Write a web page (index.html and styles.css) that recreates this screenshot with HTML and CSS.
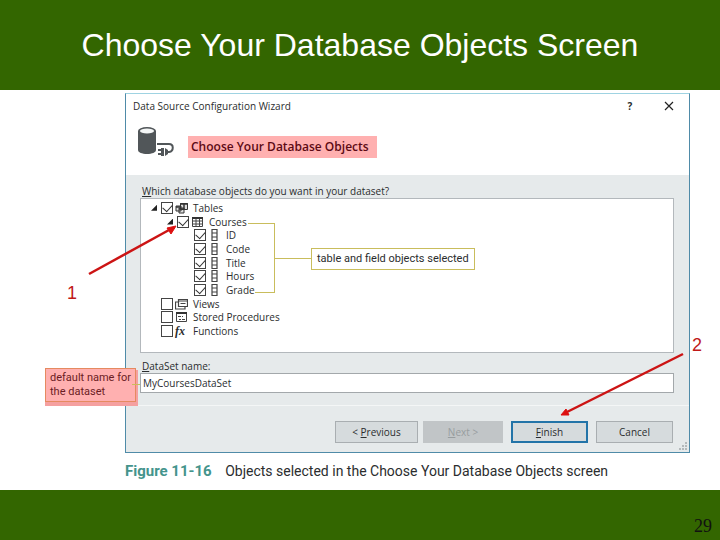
FILE: index.html
```html
<!DOCTYPE html>
<html lang="en">
<head>
    <meta charset="UTF-8">
    <meta name="viewport" content="width=device-width, initial-scale=1.0">
    <title>Choose Your Database Objects Screen</title>
    <link rel="stylesheet" href="styles.css">
</head>
<body>
    <header class="slide-header">
        <h1>Choose Your Database Objects Screen</h1>
    </header>

    <main class="figure">
        <section class="dialog">
            <div class="title-bar">
                <span class="title">Data Source Configuration Wizard</span>
                <button class="title-button help" aria-label="Help">?</button>
                <button class="title-button" aria-label="Close">
                    <svg width="10" height="10" viewBox="0 0 10 10"><path d="M1 1l8 8M9 1l-8 8" stroke="#222" stroke-width="1.2"/></svg>
                </button>
            </div>
            <div class="banner">
                <svg class="banner-icon" width="38" height="34" viewBox="0 0 38 34">
                    <path d="M1 5v19c0 2.400 4 4 9 4s9-1.600 9-4V5z" fill="#515659"/>
                    <ellipse cx="10" cy="5" rx="9" ry="4" fill="#515659"/>
                    <ellipse cx="10" cy="5" rx="7" ry="2.500" fill="#f4f6f6"/>
                    <path d="M20 18h12c5 0 5 7 0 8h-2" fill="none" stroke="#515659" stroke-width="2"/>
                    <path d="M24 22h3v8h-3zM28 22l3 2v4l-3 2zM21 23h3v2h-3zM21 27h3v2h-3z" fill="#515659"/>
                </svg>
                <h2>Choose Your Database Objects</h2>
            </div>
            <div class="dialog-body">
                <div class="field-label" id="treeLabel"><u>W</u>hich database objects do you want in your dataset?</div>
                <div class="tree-box">
                    <ul class="tree" aria-labelledby="treeLabel">
                        <li>
                            <button class="toggle" aria-label="Collapse Tables"></button>
                            <input type="checkbox" id="tables" checked>
                            <svg class="icon" width="13" height="12" viewBox="0 0 13 12">
                                <path d="M5.500 1.500h7v6h-7zM1 4h5v5H1zM4 6h5v5H4z" fill="#ddd" stroke="#333"/>
                                <path d="M5 2h8M1 5h5M4 7h5M9 1v6" stroke="#333" stroke-width="1.500"/>
                            </svg>
                            <label for="tables">Tables</label>
                        </li>
                        <li class="level-2">
                            <button class="toggle" aria-label="Collapse Courses"></button>
                            <input type="checkbox" id="courses" checked>
                            <svg class="icon" width="13" height="12" viewBox="0 0 13 12">
                                <path d="M1.500 1.500h10v9h-10zM1.500 5h10M1.500 8h10M5 2v9M8.500 2v9" fill="none" stroke="#444"/>
                                <path d="M1 2h11" stroke="#333" stroke-width="2"/>
                            </svg>
                            <label for="courses">Courses</label>
                        </li>
                        <li class="level-3">
                            <input type="checkbox" id="fieldId" checked>
                            <svg class="icon" width="13" height="12" viewBox="0 0 13 12"><path d="M4 .5h5v11H4zM4 4h5M4 8h5" fill="none" stroke="#444" stroke-width="1.200"/></svg>
                            <label for="fieldId">ID</label>
                        </li>
                        <li class="level-3">
                            <input type="checkbox" id="fieldCode" checked>
                            <svg class="icon" width="13" height="12" viewBox="0 0 13 12"><path d="M4 .5h5v11H4zM4 4h5M4 8h5" fill="none" stroke="#444" stroke-width="1.200"/></svg>
                            <label for="fieldCode">Code</label>
                        </li>
                        <li class="level-3">
                            <input type="checkbox" id="fieldTitle" checked>
                            <svg class="icon" width="13" height="12" viewBox="0 0 13 12"><path d="M4 .5h5v11H4zM4 4h5M4 8h5" fill="none" stroke="#444" stroke-width="1.200"/></svg>
                            <label for="fieldTitle">Title</label>
                        </li>
                        <li class="level-3">
                            <input type="checkbox" id="fieldHours" checked>
                            <svg class="icon" width="13" height="12" viewBox="0 0 13 12"><path d="M4 .5h5v11H4zM4 4h5M4 8h5" fill="none" stroke="#444" stroke-width="1.200"/></svg>
                            <label for="fieldHours">Hours</label>
                        </li>
                        <li class="level-3">
                            <input type="checkbox" id="fieldGrade" checked>
                            <svg class="icon" width="13" height="12" viewBox="0 0 13 12"><path d="M4 .5h5v11H4zM4 4h5M4 8h5" fill="none" stroke="#444" stroke-width="1.200"/></svg>
                            <label for="fieldGrade">Grade</label>
                        </li>
                        <li class="leaf">
                            <input type="checkbox" id="views">
                            <svg class="icon" width="13" height="12" viewBox="0 0 13 12">
                                <path d="M3.500 1.500h9v7h-9zM3 3h9" fill="#fff" stroke="#444" stroke-width="1.200"/>
                                <path d="M3 4H.5v7H10V9M5.500 5.500h5" fill="none" stroke="#444" stroke-width="1.200"/>
                            </svg>
                            <label for="views">Views</label>
                        </li>
                        <li class="leaf">
                            <input type="checkbox" id="procedures">
                            <svg class="icon" width="13" height="12" viewBox="0 0 13 12">
                                <path d="M1.500 1.500h10v9h-10z" fill="#fff" stroke="#444"/>
                                <path d="M1 2h11" stroke="#333" stroke-width="2"/>
                                <path d="M3 5.500h3M7 5.500h1M4 8.500h2M7 8.500h3" stroke="#444" stroke-width="1.200"/>
                            </svg>
                            <label for="procedures">Stored Procedures</label>
                        </li>
                        <li class="leaf">
                            <input type="checkbox" id="functions">
                            <span class="icon fx">fx</span>
                            <label for="functions">Functions</label>
                        </li>
                    </ul>
                </div>
                <label class="field-label dataset-label" for="datasetName"><u>D</u>ataSet name:</label>
                <input type="text" id="datasetName" class="dataset-input" value="MyCoursesDataSet">
            </div>
            <div class="actions">
                <button class="action previous">&lt; <u>P</u>revious</button>
                <button class="action next" disabled><u>N</u>ext &gt;</button>
                <button class="action finish"><u>F</u>inish</button>
                <button class="action">Cancel</button>
            </div>
            <svg class="grip" width="8" height="8" viewBox="0 0 8 8">
                <path d="M6 0h2v2H6zM3 3h2v2H3zM6 3h2v2H6zM0 6h2v2H0zM3 6h2v2H3zM6 6h2v2H6z" fill="#b4b9bb"/>
            </svg>
        </section>
        <p class="caption"><strong>Figure 11-16</strong> Objects selected in the Choose Your Database Objects screen</p>

        <!-- callouts over the dialog -->
        <div class="bracket courses-line"></div>
        <div class="bracket grade-line"></div>
        <div class="bracket middle-line"></div>
        <div class="callout selected-note">table and field objects selected</div>
        <div class="callout name-note">default name for<br>the dataset</div>
        <div class="bracket name-line"></div>

        <span class="step step-1">1</span>
        <svg class="arrow arrow-1" width="92" height="54" viewBox="0 0 92 54">
            <path d="M2 52L82 8" stroke="#cc1414" stroke-width="2.500"/>
            <path d="M89 4l-5 8-4-6z" fill="#dd1010" stroke="#dd1010"/>
        </svg>
        <span class="step step-2">2</span>
        <svg class="arrow arrow-2" width="126" height="66" viewBox="0 0 126 66">
            <path d="M124 2L8 60" stroke="#cc1414" stroke-width="2.500"/>
            <path d="M2 63l5-6 3 6z" fill="#dd1010" stroke="#dd1010"/>
        </svg>
    </main>

    <footer class="slide-footer">29</footer>
</body>
</html>
```

FILE: styles.css
```css
:root {
    --green: #336600;
    --text: #2b2d2e;
    --panel: #e6eaeb;
    --callout: #c9bd5c;
    --red: #c01818;
}

* {
    box-sizing: border-box;
}

body {
    margin: 0;
    min-height: 100vh;
    display: flex;
    flex-direction: column;
    background: #fff;
    color: var(--text);
    font-family: "Open Sans", "Liberation Sans", sans-serif;
    font-size: 10px;
    line-height: 14px;
}

button,
input {
    font: inherit;
    color: inherit;
    margin: 0;
    padding: 0;
}

h1,
h2,
p,
ul {
    margin: 0;
    padding: 0;
}

.slide-header {
    height: 90px;
    display: flex;
    align-items: center;
    justify-content: center;
    background: var(--green);
}

.slide-header h1 {
    color: #fff;
    font-family: "Liberation Sans", Arial, sans-serif;
    font-size: 32px;
    font-weight: normal;
    line-height: 40px;
}

.figure {
    position: relative;
    flex: 1;
    padding: 3px 30px 0 125px;
}

.dialog {
    position: relative;
    display: flex;
    flex-direction: column;
    background: var(--panel);
    border: 1px solid #4f8ba8;
    border-top-color: #9fd3e2;
}

.title-bar {
    display: flex;
    align-items: center;
    height: 24px;
    padding: 0 14px 0 7px;
    background: #fff;
}

.title {
    flex: 1;
}

.title-button {
    width: 12px;
    height: 14px;
    margin-left: 27px;
    display: flex;
    align-items: center;
    justify-content: center;
    border: none;
    background: none;
}

.help {
    font-weight: bold;
}

.banner {
    display: flex;
    align-items: flex-start;
    gap: 13px;
    height: 57px;
    padding: 8px 11px;
    background: #fff;
}

.banner h2 {
    margin-top: 10px;
    padding: 0 8px 0 3px;
    background: #ffb0b0;
    color: #5c0a14;
    font-size: 12px;
    font-weight: 600;
    line-height: 22px;
}

.dialog-body {
    display: flex;
    flex-direction: column;
    height: 231px;
    padding: 9px 15px 0 14px;
    border-bottom: 1px solid #f4f6f6;
}

.field-label {
    padding-left: 2px;
}

.tree-box {
    height: 155px;
    padding: 2px 0 0 10px;
    background: #fff;
    border: 1px solid #b3b8bc;
}

.tree {
    display: grid;
    grid-auto-rows: 1fr;
    height: 137px;
    list-style: none;
}

.tree li {
    display: flex;
    align-items: center;
    min-height: 0;
}

.tree .level-2 {
    padding-left: 16px;
}

.tree .level-3 {
    padding-left: 43px;
}

.tree .leaf {
    padding-left: 10px;
}

.tree label {
    line-height: 12px;
}

.toggle {
    width: 6px;
    height: 6px;
    margin-right: 4px;
    border: none;
    background: #222;
    clip-path: polygon(100% 0, 100% 100%, 0 100%);
}

.tree input {
    position: relative;
    appearance: none;
    width: 12px;
    height: 12px;
    border: 1px solid #444;
    background: #fff;
}

.tree input:checked::after {
    content: "";
    position: absolute;
    left: 1px;
    top: 1px;
    width: 8px;
    height: 5px;
    border: solid #333;
    border-width: 0 0 1px 1px;
    transform: rotate(-48deg);
}

.icon {
    width: 13px;
    margin: 0 5px 0 2px;
}

.fx {
    font-family: "Liberation Serif", serif;
    font-size: 12px;
    font-style: italic;
    font-weight: bold;
    line-height: 12px;
}

.dataset-label {
    margin-top: 6px;
}

.dataset-input {
    height: 20px;
    padding: 0 2px;
    background: #fff;
    border: 1px solid #a3a8ab;
}

.actions {
    display: flex;
    justify-content: flex-end;
    padding: 15px 16px 9px;
}

.action {
    width: 77px;
    height: 22px;
    background: #d6dbdd;
    border: 1px solid #a9aeb1;
}

.previous {
    width: 83px;
    margin-right: 5px;
}

.next {
    width: 80px;
    background: #c1c5c7;
    border-color: #c1c5c7;
    color: #989d9f;
}

.finish {
    margin: 0 8px;
    border: 2px solid #2374a8;
}

.grip {
    position: absolute;
    right: 2px;
    bottom: 2px;
}

.caption {
    margin-top: 8px;
    font-family: Roboto, "Liberation Sans", sans-serif;
    font-size: 14px;
    line-height: 20px;
}

.caption strong {
    margin-right: 10px;
    color: #44948c;
    font-size: 15px;
}

.bracket {
    position: absolute;
    border: 0 solid var(--callout);
}

.courses-line {
    left: 248px;
    top: 133px;
    width: 27px;
    height: 35px;
    border-width: 1px 1px 0 0;
}

.grade-line {
    left: 255px;
    top: 168px;
    width: 20px;
    height: 35px;
    border-width: 0 1px 1px 0;
}

.middle-line {
    left: 275px;
    top: 168px;
    width: 36px;
    border-top-width: 1px;
}

.callout {
    position: absolute;
    padding: 3px 5px;
    border: 1px solid var(--callout);
    background: #fff;
    font-family: Roboto, "Liberation Sans", sans-serif;
    font-size: 11px;
    white-space: nowrap;
}

.selected-note {
    left: 311px;
    top: 158px;
}

.name-note {
    left: 45px;
    top: 278px;
    padding: 2px 4px;
    background: #ffb0b0;
    border-color: #e58a60;
    box-shadow: 1px 3px 0 1px #f5a0a0;
    color: #6b1c24;
}

.name-line {
    left: 132px;
    top: 294px;
    width: 8px;
    border-top-width: 1px;
}

.step {
    position: absolute;
    color: var(--red);
    font-family: "Liberation Sans", Arial, sans-serif;
    font-size: 18px;
    line-height: 20px;
}

.step-1 {
    left: 67px;
    top: 193px;
}

.step-2 {
    right: 18px;
    top: 245px;
}

.arrow {
    position: absolute;
    pointer-events: none;
}

.arrow-1 {
    left: 87px;
    top: 132px;
}

.arrow-2 {
    right: 35px;
    top: 262px;
}

.slide-footer {
    height: 50px;
    padding: 26px 8px 0;
    background: var(--green);
    color: #111;
    font-family: "Liberation Serif", serif;
    font-size: 18px;
    line-height: 20px;
    text-align: right;
}
```
